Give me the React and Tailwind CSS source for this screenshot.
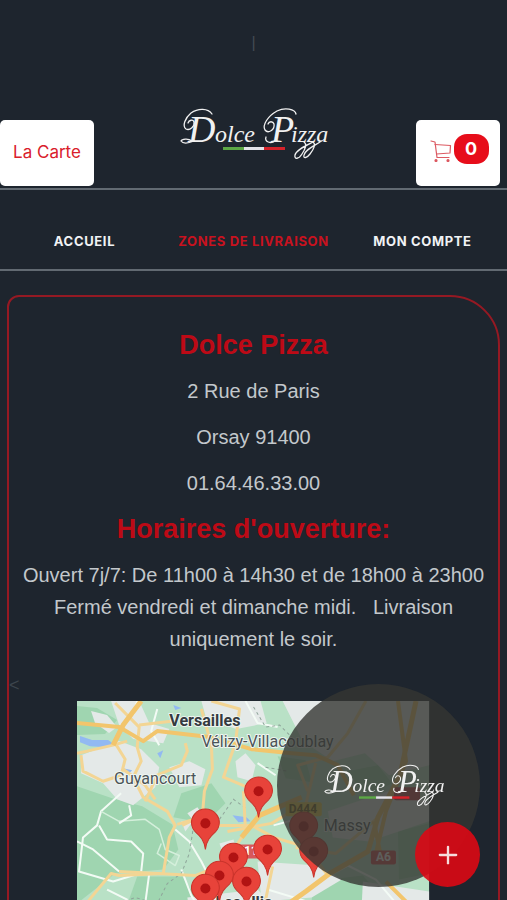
import { Plus } from 'lucide-react'

const PINS = [
  [181, 90],
  [128, 122],
  [226, 125],
  [190, 148],
  [236, 150],
  [156, 156],
  [142, 174],
  [169, 180],
  [128, 187],
]

function Logo({ className }) {
  return (
    <svg viewBox="0 0 150 56" className={className} role="img" aria-label="Dolce Pizza">
      <g fill="#f1f1f1" className="font-['Liberation_Serif',serif] italic">
        <text y="36">
          <tspan x="8" fontSize="38">D</tspan>
          <tspan x="35" fontSize="24">olce</tspan>
          <tspan x="91" fontSize="38">P</tspan>
          <tspan x="111" fontSize="24">izza</tspan>
        </text>
      </g>
      <g fill="none" stroke="#f1f1f1" strokeWidth="1.3" strokeLinecap="round">
        <path d="M32 8C28 2 18 2 11 7 5 12 2 20 6 23c4 2 9-3 8-7-1-3-5-2-6 1" />
        <path d="M12 35c-4-3-10-2-11 0 2 3 8 2 13 0" />
        <path d="M116 8c-1-5-11-7-19-3-9 5-15 14-12 19 3 4 10 0 9-6-1-3-5-3-6 0" />
        <path d="M95 35c-4 3-11 1-9-4" />
        <path d="M124 36c3 2 2 6-2 12-3 5-8 6-7 1 1-5 10-9 18-13" />
        <path d="M133 36c3 2 1 7-3 12-3 4-7 5-6 1 1-5 8-8 16-13" />
      </g>
      <path d="M43 42.500h21" stroke="#5da846" strokeWidth="3" />
      <path d="M64 42.500h20" stroke="#e4e4ea" strokeWidth="3" />
      <path d="M84 42.500h21" stroke="#d5222a" strokeWidth="3" />
    </svg>
  )
}

function CartIcon() {
  return (
    <svg viewBox="0 0 22 22" className="h-[22px] w-[22px]" fill="none" stroke="#dc5a62" strokeWidth="1.2" strokeLinejoin="round" strokeLinecap="round">
      <path d="M1 1l4 1 2 15.500H19" />
      <path d="M5 4.500L20.500 5.500l-.5 7.500L6.500 14" />
      <circle cx="6" cy="20.500" r="1" fill="#dc3b45" />
      <circle cx="18" cy="20.500" r="1" fill="#dc3b45" />
    </svg>
  )
}

function DeliveryMap() {
  return (
    <svg viewBox="0 0 351 260" className="block w-full" role="img" aria-label="Zones de livraison">
      <rect width="351" height="260" fill="#b9e1c6" />
      {/* forests */}
      <g fill="#9fd5b0">
        <path d="M0 85l35 12 30 8 30 18 6 25-15 20-48 4-38 30H0z" />
        <path d="M0 5l20 2 20 12-12 14L0 34z" />
        <path d="M104 92l30-10 14 20-20 20-32-6z" />
        <path d="M60 175l45 0 20 30v55H30z" />
        <path d="M270 70l30-6 14 18-26 14zM200 55l28 4 6 22-26-4z" />
        <path d="M235 180l50-6 26 30-40 56h-40z" />
        <path d="M320 130l31-8v50l-30 6z" />
      </g>
      {/* built-up areas */}
      <g fill="#e4e9e8">
        <path d="M14 10l16 4 10 12-8 6-14-10z" />
        <path d="M34 0h28l10 22 20 6-6 14-30-4-14-14z" />
        <path d="M4 54l38-14 22 8 18 18-4 20-22 18-16-6-14-16-22-10z" />
        <path d="M92 66l20-6 16 8-4 16-22 2z" />
        <path d="M124 0h59l6 22-30 6-30-10z" />
        <path d="M158 60l10-8 10 12-4 16-14-4z" />
        <path d="M205 0h146v64l-40 10-24-22-32 8-30-20z" />
        <path d="M110 112l10-6 6 8-8 8zM142 142l14-4 4 14-12 6zM104 120l10 2-6 8z" />
        <path d="M180 160l60 4 24 14-30 18-50 4z" />
        <path d="M250 110l60-20 41 10v20l-60 20-36-4z" />
        <path d="M110 196l70-8 20 20v52h-80z" />
        <path d="M285 180l66 10v70h-70z" />
      </g>
      <g fill="#92b9f2">
        <path d="M3 35l12 4 16 0 6 4-8 3-16-1-10-4zM46 67l9 2-4 4zM80 52l6-3-3 8zM155 114l14 2 4 4-12 1z" />
        <path d="M96 4l8 3-6 2z" />
      </g>
      {/* minor roads */}
      <g fill="none" stroke="#f3fbf5" strokeWidth="2" strokeLinejoin="round">
        <path d="M44 92L24 110l-4 14-14 12-4 34 34 10 26-8" />
        <path d="M0 140l16 8 26 22M22 124l8 14 24 2 12 12-2 18" />
        <path d="M24 110l18 10 26-2 14 10 6 20 14 6-4 10-18-12 4-10" strokeWidth="1.5" stroke="#d4efdb" />
        <path d="M98 128l14 12 12 20 6 12M72 172l-4 30 14 26M104 168l10 26 12 20" />
        <path d="M80 8l-6 22 8 14M180 62l18 12M30 188l20 10 8 30M60 0l-4 14M52 104l2 10-12 8" />
        <path d="M196 124l22-6M240 180l30-16 28 14 22 26M190 188l40 12 20 24M168 0l12 22 20 4" />
      </g>
      <g fill="none" stroke="#8fa59a" strokeWidth="1" strokeDasharray="3 3">
        <path d="M176 6l12 20 14-2 14 14M142 118l14-20 14 10" />
        <path d="M128 118l-12 8-4 26-8 20-14 10-10 20-22-6-22 8M188 66l22 4" />
      </g>
      {/* main roads */}
      <g fill="none" stroke="#f3d594" strokeWidth="3" strokeLinejoin="round">
        <path d="M0 52l10-2 26-6 14-4M4 54l2 16 20 10 18-6 4-16-10-16" />
        <path d="M38 2l24 24-2 20 4 14-8 16 10 20 24 14 8 14-6 12-6 36-44 2-8-2-20 24-14 18-10 4" />
        <path d="M108 42l2 8-6 14-24 10-12 26M46 68l22 16 10 14" />
        <path d="M124 8l10 36 1 24-8 22-2 24-20 10M134 0l28 8-4 34-12 34 38 16" />
        <path d="M62 24l34-4M100 123l32-10M42 170l76 4 20-8M140 124h34l22 12M166 90l2 40-14 22" />
        <path d="M150 130l44-8 30-18M196 136l34 10 20 28M195 165l-8 38" />
        <path d="M230 90l-10-26 30-8 20-24 18-32M218 146l40 6 40-34M238 62l-14 58 8 30" />
      </g>
      <g fill="none" stroke="#f2c56c" strokeWidth="5" strokeLinejoin="round">
        <path d="M64 0L46 24 36 44" />
        <path d="M0 22l42 4 24 14 14-10 52 6 42 12 40 4 24 2 22 10 16 30" strokeWidth="4" />
        <path d="M164 136l18-22 42-18M200 210l28-20 24-18 38-22 10-34 22-42 16-74" />
        <path d="M320 0l8 60-20 50-12 50M308 180l20 20 10 40M302 150l-6-30" strokeWidth="4" />
      </g>
      <g className="font-[Roboto,sans-serif]" fontSize="16" fill="#4b5358" stroke="#eef5f0" strokeWidth="2" strokeLinejoin="round" paintOrder="stroke">
        <text x="92" y="25" className="font-bold" fill="#353a3f">Versailles</text>
        <text x="124" y="46">Vélizy-Villacoublay</text>
        <text x="37" y="83">Guyancourt</text>
        <text x="246" y="130">Massy</text>
        <text x="138" y="206" className="font-bold" fill="#353a3f">Les Ulis</text>
      </g>
      <g className="font-[Roboto,sans-serif] font-bold" fontSize="12">
        <rect x="208" y="101" width="36" height="14" rx="2" fill="#f0cf4a" />
        <text x="211" y="112" fill="#6b5a1c">D444</text>
        <rect x="155" y="143" width="30" height="14" rx="2" fill="#d8585c" />
        <text x="158" y="154" fill="#ffffff">N118</text>
        <rect x="293" y="149" width="25" height="14" rx="2" fill="#d8484e" />
        <text x="298" y="160" fill="#ffffff">A6</text>
        <rect x="316" y="86" width="26" height="13" rx="2" fill="#c9404d" />
      </g>
      {PINS.map(([x, y]) => (
        <g key={`${x}-${y}`} transform={`translate(${x} ${y})`}>
          <path d="M0 26C-1 17-5 13-10 8.500-15 3-15-4-11-9-5-16 5-16 11-9c4 5 4 12-1 17.500C5 13 1 17 0 26z" fill="#e8433a" stroke="#c9342c" strokeWidth="1" />
          <circle r="5" fill="#b11313" />
        </g>
      ))}
    </svg>
  )
}

export default function App() {
  return (
    <div className="h-screen overflow-y-auto bg-[#1e252e] font-['Liberation_Sans',sans-serif] [scrollbar-width:none]">
      <header>
        <div className="mb-5 flex h-[86px] items-center justify-center text-base text-[#434b54]">|</div>
        <div className="flex items-end justify-between border-b-2 border-[#626a72] pr-[7px] pb-[2px]">
          <button className="h-[66px] w-[94px] rounded-[5px] bg-white font-[Inter,sans-serif] text-[17px] text-[#d9202b]">
            La Carte
          </button>
          <a href="#accueil" className="mb-6 block">
            <Logo className="w-[150px]" />
          </a>
          <button aria-label="Panier" className="flex h-[66px] w-[84px] items-start justify-center gap-0.5 rounded-[5px] bg-white pt-[14px] pl-0.5">
            <span className="pt-[6px]">
              <CartIcon />
            </span>
            <span className="flex h-[30px] w-[35px] items-center justify-center rounded-[13px] bg-[#e70d1a] font-[Inter,sans-serif] text-lg font-bold text-white">
              0
            </span>
          </button>
        </div>
        <nav className="grid h-[81px] grid-cols-3 items-center border-b-2 border-[#626a72] pt-[25px] text-center font-[Inter,sans-serif] text-[13px] font-bold tracking-wider whitespace-nowrap text-[#f1f3f5]">
          <a href="#accueil">ACCUEIL</a>
          <a href="#zones" className="text-[#c8121f]">ZONES DE LIVRAISON</a>
          <a href="#compte">MON COMPTE</a>
        </nav>
      </header>

      <main className="mx-[7px] mt-6 rounded-tl-xl rounded-tr-[50px] border-2 border-[#951923] pt-8 pb-8 text-center text-[20px] leading-8 text-[#c3c8cc]">
        <div className="flex flex-col gap-[14px]">
          <h1 className="text-[27px] font-bold text-[#bd0a16]">Dolce Pizza</h1>
          <p>2 Rue de Paris</p>
          <p>Orsay 91400</p>
          <p>01.64.46.33.00</p>
          <h2 className="text-[27px] font-bold text-[#bd0a16]">Horaires d'ouverture:</h2>
          <p className="px-3">
            Ouvert 7j/7: De 11h00 à 14h30 et de 18h00 à 23h00 Fermé vendredi et dimanche midi. &nbsp; Livraison uniquement le soir.
          </p>
          <div>
            <p className="text-left text-lg leading-8 text-[#3c444c]">&lt;</p>
            <div className="mx-auto w-[72%]">
              <DeliveryMap />
            </div>
          </div>
        </div>
      </main>

      <div className="fixed right-[27px] bottom-[13px] flex h-[203px] w-[203px] items-center justify-center rounded-full bg-[#353632]/80 pl-3">
        <Logo className="w-[122px]" />
        <button aria-label="Ouvrir le menu" className="absolute right-0 bottom-0 flex h-[65px] w-[65px] items-center justify-center rounded-full bg-[#dc0914]/90 text-[#f6dcdc]">
          <Plus className="h-7 w-7" strokeWidth={2} />
        </button>
      </div>
    </div>
  )
}
